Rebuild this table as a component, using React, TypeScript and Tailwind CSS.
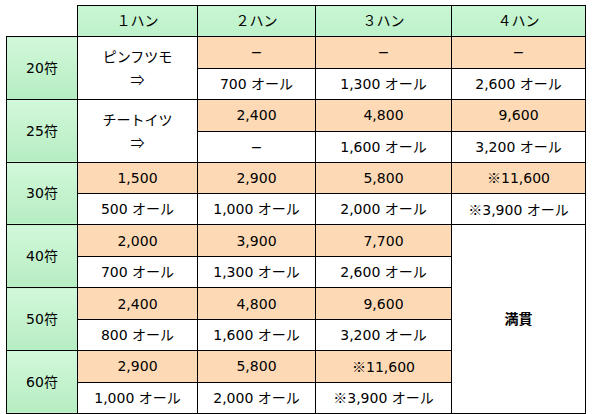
const FONT = "font-['DejaVu_Sans','Noto_Sans_CJK_JP',sans-serif]"
const CJK = "font-['Noto_Sans_CJK_JP',sans-serif]"

type Row = {
  fu: string
  top: string[]
  bottom: string[]
  lead?: string
}

const rows: Row[] = [
  { fu: '20符', lead: 'ピンフツモ', top: ['−', '−', '−'], bottom: ['700 オール', '1,300 オール', '2,600 オール'] },
  { fu: '25符', lead: 'チートイツ', top: ['2,400', '4,800', '9,600'], bottom: ['−', '1,600 オール', '3,200 オール'] },
  { fu: '30符', top: ['1,500', '2,900', '5,800', '※11,600'], bottom: ['500 オール', '1,000 オール', '2,000 オール', '※3,900 オール'] },
  { fu: '40符', top: ['2,000', '3,900', '7,700'], bottom: ['700 オール', '1,300 オール', '2,600 オール'] },
  { fu: '50符', top: ['2,400', '4,800', '9,600'], bottom: ['800 オール', '1,600 オール', '3,200 オール'] },
  { fu: '60符', top: ['2,900', '5,800', '※11,600'], bottom: ['1,000 オール', '2,000 オール', '※3,900 オール'] },
]

const headers = ['１ハン', '２ハン', '３ハン', '４ハン']

const topCell = 'border border-black border-b-dotted bg-[#fdd9b5] text-center p-0'
const bottomCell = 'border border-black border-t-0 bg-white text-center p-0'

// ※ looks like the Japanese glyph in the reference, so give it the CJK face
function Value({ text }: { text: string }) {
  if (!text.startsWith('※')) return <>{text}</>
  return (
    <>
      <span className={CJK}>※</span>
      {text.slice(1)}
    </>
  )
}

export default function App() {
  return (
    <div className={`min-h-[414px] w-[592px] bg-white pt-[5px] pl-[6px] text-[14px] leading-none text-black ${FONT}`}>
      <table className="table-fixed border-collapse w-[579px]">
        <colgroup>
          <col className="w-[71px]" />
          <col className="w-[120px]" />
          <col className="w-[118px]" />
          <col className="w-[136px]" />
          <col className="w-[134px]" />
        </colgroup>
        <thead>
          <tr className="h-[31px]">
            <th className="border-0 bg-white p-0" />
            {headers.map((h) => (
              <th
                key={h}
                className="border border-black bg-gradient-to-b from-[#c8f7d3] to-[#bdf2ca] p-0 text-center font-normal"
              >
                {h}
              </th>
            ))}
          </tr>
        </thead>
        <tbody>
          {rows.map((r, i) => (
            <Group key={r.fu} row={r} mangan={i === 3} />
          ))}
        </tbody>
      </table>
    </div>
  )
}

function Group({ row, mangan }: { row: Row; mangan: boolean }) {
  return (
    <>
      <tr className="h-[31.8px]">
        <td
          rowSpan={2}
          className="border border-black bg-gradient-to-b from-[#d2f8da] to-[#b6edc2] p-0 text-center"
        >
          {row.fu}
        </td>
        {row.lead && (
          <td rowSpan={2} className="border border-black bg-white p-0 text-center leading-[22px]">
            <div>{row.lead}</div>
            <div className={CJK}>⇒</div>
          </td>
        )}
        {row.top.map((t, j) => (
          <td key={j} className={topCell}>
            <Value text={t} />
          </td>
        ))}
        {mangan && (
          <td rowSpan={12} className="border border-black bg-white p-0 text-center font-bold">
            満貫
          </td>
        )}
      </tr>
      <tr className="h-[31px]">
        {row.bottom.map((t, j) => (
          <td key={j} className={bottomCell}>
            <Value text={t} />
          </td>
        ))}
      </tr>
    </>
  )
}
